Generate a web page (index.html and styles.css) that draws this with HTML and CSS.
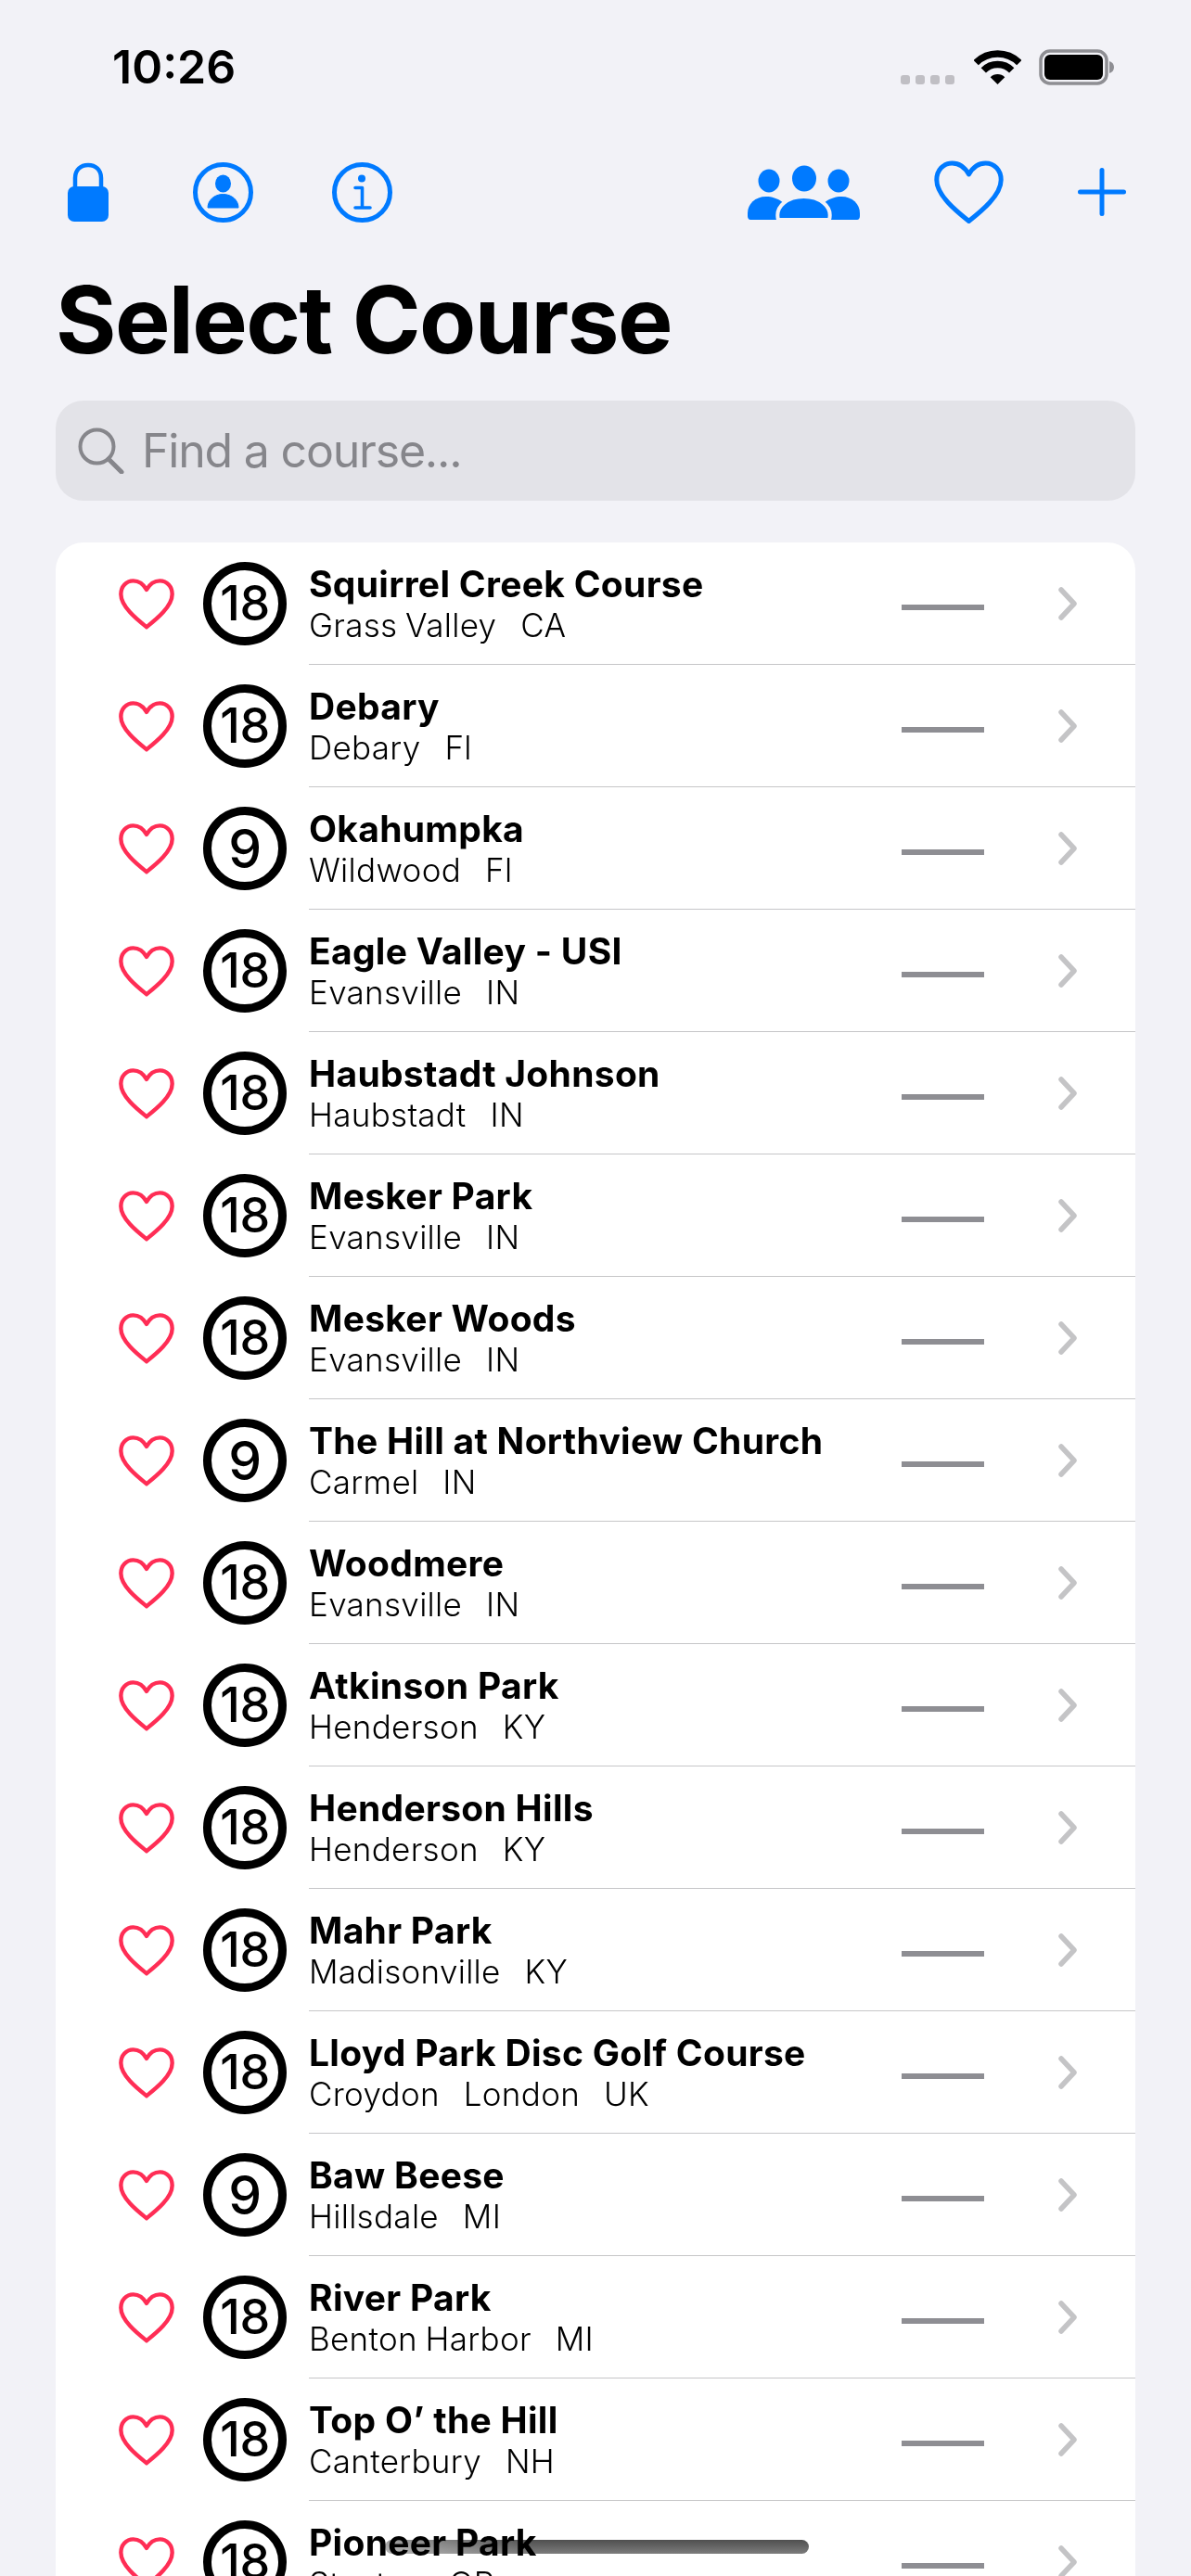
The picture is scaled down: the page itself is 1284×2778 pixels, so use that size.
FILE: index.html
```html
<!DOCTYPE html>
<html lang="en">
<head>
  <meta charset="UTF-8" />
  <title>Select Course</title>
  <link rel="stylesheet" href="styles.css">
</head>
<body>
  <svg class="defs" width="0" height="0">
    <symbol id="heart" viewBox="0 0 75 69">
      <path d="M37.5 65.5C25 55.5 2.8 38 2.8 21C2.8 10.5 10 3 19.5 3C27.5 3 33.5 8 37.5 15C41.5 8 47.5 3 55.5 3C65 3 72.2 10.5 72.2 21C72.2 38 50 55.5 37.5 65.5Z" fill="none" stroke="currentColor" stroke-linejoin="round" />
    </symbol>
    <symbol id="chevron" viewBox="0 0 20 36">
      <path d="M3 3L17 18L3 33" fill="none" stroke="currentColor" stroke-width="5.5" stroke-linecap="round" stroke-linejoin="round" />
    </symbol>
  </svg>

  <div class="screen">
    <header class="status">
      <span class="time">10:26</span>
      <div class="status-right">
        <div class="signal"><i></i><i></i><i></i><i></i></div>
        <svg class="wifi" width="51" height="38" viewBox="0 0 51 38">
          <path d="M2.2 14.7A33 33 0 0 1 48.8 14.7" fill="none" stroke="#000" stroke-width="7.5" />
          <path d="M10.3 22.8A21.5 21.5 0 0 1 40.7 22.8" fill="none" stroke="#000" stroke-width="7.5" />
          <path d="M25.5 38L17.7 30.2A11 11 0 0 1 33.3 30.2Z" fill="#000" />
        </svg>
        <svg class="battery" width="82" height="39" viewBox="0 0 82 39">
          <rect x="2" y="2" width="71" height="35" rx="10" fill="none" stroke="#8e8e93" stroke-width="3.5" />
          <rect x="6" y="6" width="63" height="27" rx="6" fill="#000" />
          <path d="M76 13C79 14 81 16 81 19.5C81 23 79 25 76 26Z" fill="#8e8e93" />
        </svg>
      </div>
    </header>

    <nav class="nav">
      <svg class="ic-lock" width="44" height="64" viewBox="0 0 44 64">
        <path d="M8 28V17C8 8 14 3 22 3C30 3 36 8 36 17V28" fill="none" stroke="currentColor" stroke-width="4.5" />
        <rect y="26" width="44" height="38" rx="7" fill="currentColor" />
      </svg>
      <svg class="ic-person" width="65" height="65" viewBox="0 0 65 65">
        <circle cx="32.5" cy="32.5" r="30" fill="none" stroke="currentColor" stroke-width="5" />
        <ellipse cx="32.5" cy="23" rx="8.5" ry="9.5" fill="currentColor" />
        <path d="M16 49C16 41 23 34.5 32.5 34.5C42 34.5 49 41 49 49Z" fill="currentColor" stroke="currentColor" stroke-linejoin="round" />
      </svg>
      <svg class="ic-info" width="65" height="65" viewBox="0 0 65 65">
        <circle cx="32.5" cy="32.5" r="30" fill="none" stroke="currentColor" stroke-width="5" />
        <circle cx="32" cy="17.5" r="4" fill="currentColor" />
        <path d="M25 27.5H32.5V49M25 49H41" fill="none" stroke="currentColor" stroke-width="3.6" stroke-linecap="round" stroke-linejoin="round" />
      </svg>
      <div class="nav-space"></div>
      <svg class="ic-team" width="121" height="59" viewBox="0 0 121 59">
        <ellipse cx="23" cy="17" rx="11.5" ry="12.5" fill="currentColor" />
        <ellipse cx="98" cy="17" rx="11.5" ry="12.5" fill="currentColor" />
        <path d="M0 52C0 42 8 34 20 34C32 34 44 42 44 52V59H3C1 59 0 57 0 55Z" fill="currentColor" />
        <path d="M121 52C121 42 113 34 101 34C89 34 77 42 77 52V59H118C120 59 121 57 121 55Z" fill="currentColor" />
        <ellipse cx="61" cy="14.5" rx="13" ry="14" fill="currentColor" />
        <path d="M33 59C29 44 44 34 60.500 34C77 34 92 44 88 59H33Z" fill="currentColor" stroke="#f2f2f7" stroke-width="4" />
      </svg>
      <svg class="ic-heart" width="75" height="69"><use href="#heart" /></svg>
      <svg class="ic-plus" width="52" height="52" viewBox="0 0 52 52">
        <path d="M2.500 26H49.500M26 2.500V49.500" fill="none" stroke="currentColor" stroke-width="5" stroke-linecap="round" />
      </svg>
    </nav>

    <h1 class="page-title">Select Course</h1>

    <div class="search">
      <svg width="50" height="50" viewBox="0 0 50 50">
        <circle cx="20.500" cy="20.500" r="18" fill="none" stroke="currentColor" stroke-width="4" />
        <path d="M33 34L47 48" fill="none" stroke="currentColor" stroke-width="5" stroke-linecap="round" />
      </svg>
      <span>Find a course...</span>
    </div>

    <div class="course-list">
      <div class="course">
        <svg class="fav"><use href="#heart" /></svg><span class="holes">18</span>
        <div class="course-body"><div class="course-text"><div class="name">Squirrel Creek Course</div><div class="place">Grass Valley   CA</div></div><span class="dash"></span><svg class="chev"><use href="#chevron" /></svg></div>
      </div>
      <div class="course">
        <svg class="fav"><use href="#heart" /></svg><span class="holes">18</span>
        <div class="course-body"><div class="course-text"><div class="name">Debary</div><div class="place">Debary   Fl</div></div><span class="dash"></span><svg class="chev"><use href="#chevron" /></svg></div>
      </div>
      <div class="course">
        <svg class="fav"><use href="#heart" /></svg><span class="holes nine">9</span>
        <div class="course-body"><div class="course-text"><div class="name">Okahumpka</div><div class="place">Wildwood   Fl</div></div><span class="dash"></span><svg class="chev"><use href="#chevron" /></svg></div>
      </div>
      <div class="course">
        <svg class="fav"><use href="#heart" /></svg><span class="holes">18</span>
        <div class="course-body"><div class="course-text"><div class="name">Eagle Valley - USI</div><div class="place">Evansville   IN</div></div><span class="dash"></span><svg class="chev"><use href="#chevron" /></svg></div>
      </div>
      <div class="course">
        <svg class="fav"><use href="#heart" /></svg><span class="holes">18</span>
        <div class="course-body"><div class="course-text"><div class="name">Haubstadt Johnson</div><div class="place">Haubstadt   IN</div></div><span class="dash"></span><svg class="chev"><use href="#chevron" /></svg></div>
      </div>
      <div class="course">
        <svg class="fav"><use href="#heart" /></svg><span class="holes">18</span>
        <div class="course-body"><div class="course-text"><div class="name">Mesker Park</div><div class="place">Evansville   IN</div></div><span class="dash"></span><svg class="chev"><use href="#chevron" /></svg></div>
      </div>
      <div class="course">
        <svg class="fav"><use href="#heart" /></svg><span class="holes">18</span>
        <div class="course-body"><div class="course-text"><div class="name">Mesker Woods</div><div class="place">Evansville   IN</div></div><span class="dash"></span><svg class="chev"><use href="#chevron" /></svg></div>
      </div>
      <div class="course">
        <svg class="fav"><use href="#heart" /></svg><span class="holes nine">9</span>
        <div class="course-body"><div class="course-text"><div class="name">The Hill at Northview Church</div><div class="place">Carmel   IN</div></div><span class="dash"></span><svg class="chev"><use href="#chevron" /></svg></div>
      </div>
      <div class="course">
        <svg class="fav"><use href="#heart" /></svg><span class="holes">18</span>
        <div class="course-body"><div class="course-text"><div class="name">Woodmere</div><div class="place">Evansville   IN</div></div><span class="dash"></span><svg class="chev"><use href="#chevron" /></svg></div>
      </div>
      <div class="course">
        <svg class="fav"><use href="#heart" /></svg><span class="holes">18</span>
        <div class="course-body"><div class="course-text"><div class="name">Atkinson Park</div><div class="place">Henderson   KY</div></div><span class="dash"></span><svg class="chev"><use href="#chevron" /></svg></div>
      </div>
      <div class="course">
        <svg class="fav"><use href="#heart" /></svg><span class="holes">18</span>
        <div class="course-body"><div class="course-text"><div class="name">Henderson Hills</div><div class="place">Henderson   KY</div></div><span class="dash"></span><svg class="chev"><use href="#chevron" /></svg></div>
      </div>
      <div class="course">
        <svg class="fav"><use href="#heart" /></svg><span class="holes">18</span>
        <div class="course-body"><div class="course-text"><div class="name">Mahr Park</div><div class="place">Madisonville   KY</div></div><span class="dash"></span><svg class="chev"><use href="#chevron" /></svg></div>
      </div>
      <div class="course">
        <svg class="fav"><use href="#heart" /></svg><span class="holes">18</span>
        <div class="course-body"><div class="course-text"><div class="name">Lloyd Park Disc Golf Course</div><div class="place">Croydon   London   UK</div></div><span class="dash"></span><svg class="chev"><use href="#chevron" /></svg></div>
      </div>
      <div class="course">
        <svg class="fav"><use href="#heart" /></svg><span class="holes nine">9</span>
        <div class="course-body"><div class="course-text"><div class="name">Baw Beese</div><div class="place">Hillsdale   MI</div></div><span class="dash"></span><svg class="chev"><use href="#chevron" /></svg></div>
      </div>
      <div class="course">
        <svg class="fav"><use href="#heart" /></svg><span class="holes">18</span>
        <div class="course-body"><div class="course-text"><div class="name">River Park</div><div class="place">Benton Harbor   MI</div></div><span class="dash"></span><svg class="chev"><use href="#chevron" /></svg></div>
      </div>
      <div class="course">
        <svg class="fav"><use href="#heart" /></svg><span class="holes">18</span>
        <div class="course-body"><div class="course-text"><div class="name">Top O’ the Hill</div><div class="place">Canterbury   NH</div></div><span class="dash"></span><svg class="chev"><use href="#chevron" /></svg></div>
      </div>
      <div class="course">
        <svg class="fav"><use href="#heart" /></svg><span class="holes">18</span>
        <div class="course-body"><div class="course-text"><div class="name">Pioneer Park</div><div class="place">Stayton   OR</div></div><span class="dash"></span><svg class="chev"><use href="#chevron" /></svg></div>
      </div>
    </div>

    <div class="home-bar"></div>
  </div>
</body>
</html>
```

FILE: styles.css
```css
* { box-sizing: border-box; }
html, body { margin: 0; }
body { font-family: Inter, "Liberation Sans", sans-serif; background: #f2f2f7; color: #000; }
.defs { position: absolute; }
.screen { position: relative; height: 2778px; overflow: hidden; }

.status { display: flex; justify-content: space-between; height: 172px; padding: 53px 82px 0 121px; }
.time { font-size: 50px; font-weight: 600; line-height: 39px; }
.status-right { display: flex; align-items: flex-start; }
.signal { display: flex; gap: 6px; margin: 28px 21px 0 0; }
.signal i { width: 10px; height: 10px; border-radius: 3px; background: #c0bfc4; }
.wifi { margin-right: 19px; }

.nav { display: flex; align-items: center; height: 70px; padding: 0 70px 0 73px; color: #007aff; }
.ic-person { margin-left: 91px; }
.ic-info { margin-left: 85px; }
.nav-space { flex: 1; }
.ic-heart { margin: 0 80px; stroke-width: 5; }

.page-title { margin: 0; padding: 28px 0 0 60px; height: 190px; font-size: 100px; font-weight: 700; line-height: 150px; letter-spacing: -1.6px; }

.search { display: flex; align-items: center; gap: 19px; height: 108px; margin: 0 60px 45px; padding: 0 0 0 24px; border-radius: 30px; background: #e3e3e8; color: #86868b; font-size: 50px; letter-spacing: -1.2px; }

.course-list { margin: 0 60px; border-radius: 30px; background: #fff; overflow: hidden; }
.course { display: flex; align-items: center; height: 132px; padding-left: 68px; }
.fav { flex: none; width: 60px; height: 55px; color: #ff2d55; stroke-width: 5.5; }
.holes { flex: none; display: flex; align-items: center; justify-content: center; width: 90px; height: 90px; margin: 0 24px 0 31px; border: 9px solid #000; border-radius: 50%; font-size: 52px; font-weight: 500; line-height: 1; letter-spacing: -0.5px; }
.holes.nine { font-size: 57px; }
.course-body { flex: 1; display: flex; align-items: center; height: 132px; padding-right: 63px; border-bottom: 1.5px solid #c6c6c8; }
.course-text { flex: 1; min-width: 0; }
.name { font-size: 39px; font-weight: 700; line-height: 46px; letter-spacing: 0.3px; }
.place { font-size: 35px; font-weight: 350; line-height: 42px; white-space: pre; letter-spacing: 0.3px; word-spacing: -1.5px; }
.dash { flex: none; width: 89px; height: 6px; margin: 8px 80px 0 0; background: #8e8e93; }
.chev { flex: none; width: 20px; height: 36px; color: #c4c4c6; }

.home-bar { position: absolute; left: 415px; top: 2739px; width: 457px; height: 15px; border-radius: 8px; background: linear-gradient(to right, rgba(255,255,255,.45), rgba(255,255,255,0) 35%), linear-gradient(to bottom, #4f4f4f, #7c7c7c); mix-blend-mode: multiply; }
```
